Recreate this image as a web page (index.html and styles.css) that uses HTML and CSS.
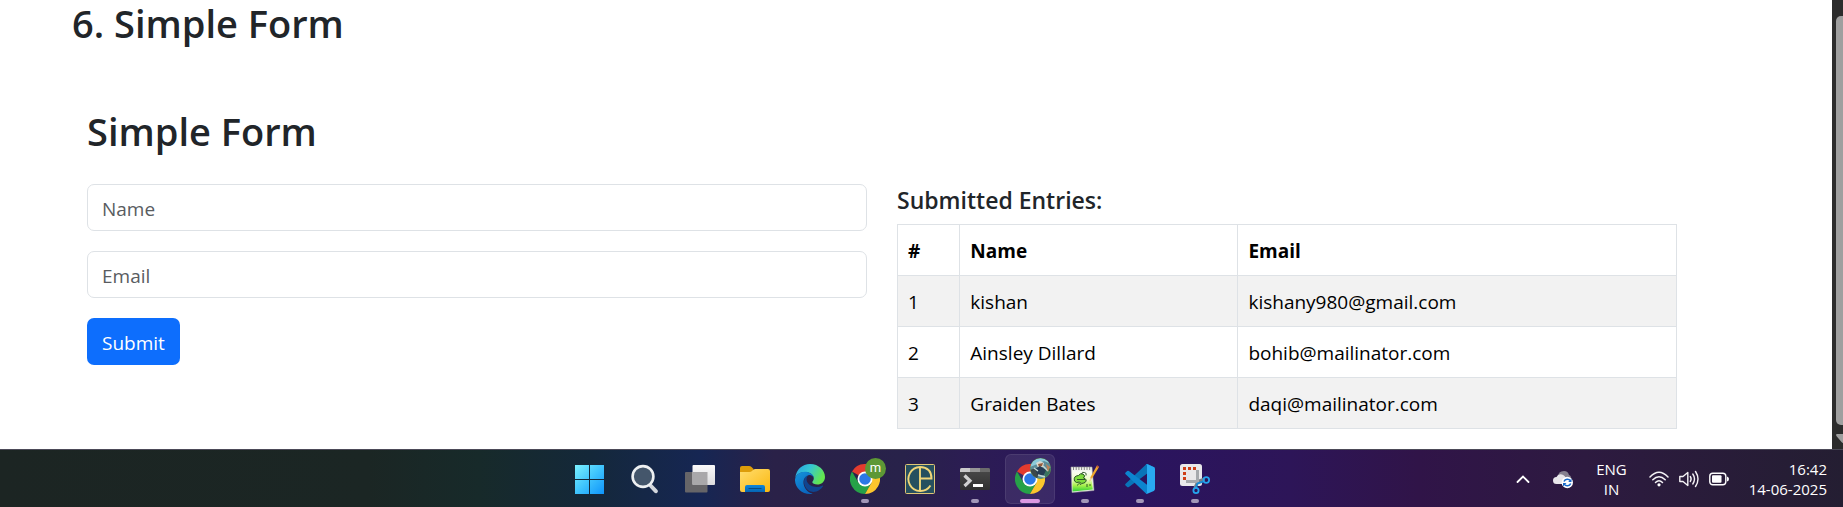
FILE: index.html
```html
<!DOCTYPE html>
<html lang="en">
<head>
<meta charset="utf-8">
<title>Simple Form</title>
<link rel="stylesheet" href="styles.css">
</head>
<body>
<div class="screen">
  <div class="viewport">
    <main class="page">
      <h1 class="title">6. Simple Form</h1>
      <section class="panel">
        <h2 class="title">Simple Form</h2>
        <div class="columns">
          <form class="form">
            <input class="field" type="text" placeholder="Name" aria-label="Name">
            <input class="field" type="email" placeholder="Email" aria-label="Email">
            <button class="submit" type="button">Submit</button>
          </form>
          <div class="entries">
            <h3 class="subtitle">Submitted Entries:</h3>
            <table class="table">
              <colgroup><col class="col-num"><col class="col-name"><col class="col-email"></colgroup>
              <thead>
                <tr><th scope="col">#</th><th scope="col">Name</th><th scope="col">Email</th></tr>
              </thead>
              <tbody>
                <tr><td>1</td><td>kishan</td><td>kishany980@gmail.com</td></tr>
                <tr><td>2</td><td>Ainsley Dillard</td><td>bohib@mailinator.com</td></tr>
                <tr><td>3</td><td>Graiden Bates</td><td>daqi@mailinator.com</td></tr>
              </tbody>
            </table>
          </div>
        </div>
      </section>
    </main>
    <div class="scrollbar">
      <div class="thumb"></div>
      <svg class="arrow" width="10" height="9" viewBox="0 0 10 9"><path d="M1 0H13Q14.500 0 13.500 2L9 8.500Q7 10 5.500 8L.4 2Q-.4 0 1 0Z" fill="#9f9f9f"/></svg>
    </div>
  </div>

  <footer class="taskbar">
    <nav class="apps" aria-label="Taskbar">
      <button class="app" aria-label="Start">
        <svg width="30" height="30" viewBox="0 0 30 30">
          <defs><linearGradient id="win" x1="0" y1="0" x2="30" y2="30" gradientUnits="userSpaceOnUse"><stop offset="0" stop-color="#7df3ff"/><stop offset=".5" stop-color="#3fc4fd"/><stop offset="1" stop-color="#0d93fb"/></linearGradient></defs>
          <path fill="url(#win)" d="M0 1H14V15H0zM15 1H29V15H15zM0 16H14V30H0zM15 16H29V30H15z"/>
        </svg>
      </button>
      <button class="app" aria-label="Search">
        <svg width="30" height="30" viewBox="0 0 30 30">
          <path d="M20.500 21.500L25.800 27.200" stroke="#d3d7dc" stroke-width="4" stroke-linecap="round"/>
          <circle cx="13" cy="12.500" r="10.400" fill="#44566b" stroke="#eef0f2" stroke-width="2.600"/>
        </svg>
      </button>
      <button class="app" aria-label="Task view">
        <svg width="30" height="30" viewBox="0 0 30 30">
          <defs><linearGradient id="tv" x1="0" y1="0" x2="0" y2="1"><stop offset="0" stop-color="#fafafa"/><stop offset="1" stop-color="#dcdcde"/></linearGradient></defs>
          <rect x="0" y="8" width="22.500" height="20.500" rx="1" fill="#666568"/>
          <rect x="7.500" y="1" width="22.500" height="20" rx="1" fill="url(#tv)"/>
          <path d="M7.500 8H22.500V21H8.500Q7.500 21 7.500 20Z" fill="#a9a8aa"/>
        </svg>
      </button>
      <button class="app" aria-label="File Explorer">
        <svg width="30" height="30" viewBox="0 0 30 30">
          <defs><linearGradient id="fe" x1="0" y1="0" x2="1" y2="1"><stop offset="0" stop-color="#ffdd6e"/><stop offset="1" stop-color="#fbb80f"/></linearGradient><linearGradient id="fb" x1="0" y1="0" x2="0" y2="1"><stop offset="0" stop-color="#0f86da"/><stop offset="1" stop-color="#0465b4"/></linearGradient></defs>
          <path d="M0 4Q0 2 2 2H9Q10.500 2 11.500 3L13.500 5V10H0Z" fill="#dd9d09"/>
          <path d="M0 8H9.500Q11 8 12 7L13 6Q14 5 15.500 5H28Q30 5 30 7V26Q30 28 28 28H2Q0 28 0 26Z" fill="url(#fe)"/>
          <path d="M5 28V23Q5 21 7 21H23Q25 21 25 23V28Z" fill="url(#fb)"/>
          <path d="M9 24.500H21" stroke="#084b83" stroke-width="1.200" stroke-linecap="round"/>
        </svg>
      </button>
      <button class="app" aria-label="Edge">
        <svg width="30" height="30" viewBox="0 0 30 30">
          <defs>
            <linearGradient id="e1" x1="0" y1="0" x2="1" y2=".4"><stop offset="0" stop-color="#259fe5"/><stop offset=".5" stop-color="#36c7d3"/><stop offset="1" stop-color="#63e650"/></linearGradient>
            <linearGradient id="e2" x1="0" y1="0" x2=".6" y2="1"><stop offset="0" stop-color="#1494dc"/><stop offset="1" stop-color="#0a64bd"/></linearGradient>
          </defs>
          <path d="M.3 14C1 5.500 7.500 0 15 0C24 0 30 6.500 30 13C30 18 26 20.500 22.500 20.500C19.500 20.500 17.300 19.500 17.300 18.300C17.300 17.300 18.800 16.700 18.800 14.300C18.800 10.500 14.500 8 10 8C5 8 1.500 10.500 .3 14Z" fill="url(#e1)"/>
          <path d="M12.300 10.500C8 14 7.500 22 13.500 26.500C19 30 25.500 26.500 28 22.300C28.300 21.700 27.800 21.400 27.200 21.700C21.500 24.300 14.500 22.500 12.200 18C10.800 15 12 11.500 14.500 10.300Z" fill="#10458f"/>
          <path d="M0 15.500C.8 10.800 5 7.800 9.700 7.800C14.200 7.800 18.800 10.300 18.800 14.300C18.500 12.300 16.700 11 14.500 11C9.500 11.300 7.500 16.800 9 21.500C10.300 25.800 14 29 17.800 29.700C16.800 29.900 16 30 15 30C6.500 30-.3 23.500 0 15.500Z" fill="url(#e2)"/>
        </svg>
      </button>
      <button class="app running" aria-label="Chrome">
        <svg width="30" height="30" viewBox="0 0 30 30">
          <path d="M15 15L2 7.500A15 15 0 0 1 28 7.500H15Z" fill="#e33b2e"/>
          <path d="M15 15L8.500 18.750L2 7.500A15 15 0 0 0 15 30L21.500 18.750Z" fill="#26a148"/>
          <path d="M15 7.500H28A15 15 0 0 1 15 30L21.500 18.750Z" fill="#fcc62d"/>
          <circle cx="15" cy="15" r="7.500" fill="#fff"/><circle cx="15" cy="15" r="5.800" fill="#2b78e6"/>
        </svg>
        <span class="badge">m</span>
      </button>
      <button class="app" aria-label="CE">
        <svg width="30" height="30" viewBox="0 0 30 30">
          <rect x=".5" y=".5" width="29" height="29" rx="1" fill="#26505f" stroke="#dfc675"/>
          <path d="M25.500 21.500A12 12 0 1 1 15 3Q26.500 3.500 26.500 14.500H15M15 3V27" fill="none" stroke="#f0d578" stroke-width="1.900"/>
        </svg>
      </button>
      <button class="app running" aria-label="Terminal">
        <svg width="30" height="30" viewBox="0 0 30 30">
          <defs><linearGradient id="tm" x1="0" y1="0" x2="0" y2="1"><stop offset="0" stop-color="#4b4b4b"/><stop offset="1" stop-color="#303030"/></linearGradient></defs>
          <rect y="4" width="30" height="22" rx="1.500" fill="url(#tm)"/>
          <path d="M0 8V5.500Q0 4 1.500 4H10V8Z" fill="#cacaca"/><path d="M10 4H20V8H10Z" fill="#969696"/><path d="M20 4H28.500Q30 4 30 5.500V8H20Z" fill="#6b6b6b"/>
          <path d="M4.500 11.500L10 16.800L4.500 22" fill="none" stroke="#d1d1d1" stroke-width="3.200"/>
          <path d="M13 21.500H23" stroke="#fff" stroke-width="3"/>
        </svg>
      </button>
      <button class="app running active" aria-label="Chrome, second profile">
        <svg width="30" height="30" viewBox="0 0 30 30">
          <path d="M15 15L2 7.500A15 15 0 0 1 28 7.500H15Z" fill="#e33b2e"/>
          <path d="M15 15L8.500 18.750L2 7.500A15 15 0 0 0 15 30L21.500 18.750Z" fill="#26a148"/>
          <path d="M15 7.500H28A15 15 0 0 1 15 30L21.500 18.750Z" fill="#fcc62d"/>
          <circle cx="15" cy="15" r="7.500" fill="#fff"/><circle cx="15" cy="15" r="5.800" fill="#2b78e6"/>
        </svg>
        <svg class="badge photo" width="21" height="21" viewBox="0 0 21 21">
          <defs><clipPath id="av"><circle cx="10.500" cy="10.500" r="10.300"/></clipPath></defs>
          <g clip-path="url(#av)">
            <rect width="21" height="21" fill="#5d8c98"/>
            <path d="M0 0H21V6L14 3L5 7L0 9Z" fill="#8bc9d9"/>
            <path d="M0 12L6 10L9 15L7 21H0Z" fill="#3c484b"/>
            <path d="M14 11L21 10V20L15 21Z" fill="#39735f"/>
            <path d="M6 5L10 3L14 5L13 9L8 10Z" fill="#d7dad1"/>
            <path d="M8 6L13 5L12 8L9 9Z" fill="#955c3c"/>
            <path d="M5 11L10 8L16 12L14 17L8 18Z" fill="#263c54"/>
            <path d="M4 10L8 13M13 8L18 13M8 17L15 19" stroke="#c5d8d3" stroke-width="1.500"/>
            <path d="M16 6L20 9L18 14Z" fill="#bb8058"/>
          </g>
        </svg>
      </button>
      <button class="app running" aria-label="Notepad++">
        <svg width="30" height="30" viewBox="0 0 30 30">
          <defs><linearGradient id="np" x1="0" y1="0" x2="0" y2="1"><stop offset="0" stop-color="#fbfdf6"/><stop offset=".4" stop-color="#eefbc4"/><stop offset=".7" stop-color="#a6f04a"/><stop offset="1" stop-color="#2fd136"/></linearGradient></defs>
          <path d="M1 3L22 3L24 26.500L2 28.500Z" fill="#f4f5ef" stroke="#999a9a" stroke-width=".6"/>
          <path d="M2 7.500H21L22.800 25.500L2.600 27.500Z" fill="url(#np)"/>
          <path d="M3 4.500H21" stroke="#888" stroke-width="3" stroke-dasharray="1 1.700"/>
          <path d="M4.500 17Q3 12 8.500 11.500Q10 9 13 10Q16 12 13.500 14Q18 15.500 15 18.500Q11 20.500 9.500 18Q6 19.500 4.500 17Z" fill="#7fdc3c" stroke="#285325" stroke-width="1"/>
          <path d="M7 15.500H15M11.500 10Q12 7.500 14.500 8.500Q17 9 16 11.500M7 21.500Q10 18 11 21M17 20V23M20 20V22" fill="none" stroke="#244824" stroke-width=".9"/>
          <path d="M19.500 17.500L20.500 13L27 1.500L29 3L22 14.500Z" fill="#f0a62c"/><path d="M19.500 17.500L20.300 13.600L22 14.600Z" fill="#edd1a2"/><path d="M26.300 2.700L27.300 1.300L29 2.600L28.200 4Z" fill="#b9543c"/>
        </svg>
      </button>
      <button class="app running" aria-label="Visual Studio Code">
        <svg width="30" height="30" viewBox="0 0 30 30">
          <path d="M.6 19.800Q-.3 20.700 .6 21.500L2.200 23Q3 23.600 3.900 23L30 3.700L22.500 0Q21.600-.2 21 .5Z" fill="#0974b8"/>
          <path d="M.6 10.200Q-.3 9.300 .6 8.500L2.200 7Q3 6.400 3.900 7L22 20.800V30Q21.300 29.800 20.700 29.200Z" fill="#0c85cf"/>
          <path d="M22.300 29.800Q21.500 30 20.800 29.300Q22 30 22 28V2Q22 0 20.800 .7Q21.500 0 22.500 .2L28.800 3.100Q30 3.700 30 5V25Q30 26.300 28.800 26.900Z" fill="#29a9f1"/>
        </svg>
      </button>
      <button class="app running" aria-label="Snipping Tool">
        <svg width="30" height="30" viewBox="0 0 30 30">
          <rect x="0" y="0" width="22" height="22" rx="2.500" fill="#e9e8ea"/>
          <path d="M3 4.500H6M8 4.500H11M13 4.500H16M4.500 8V11M4.500 13V16" stroke="#cf3f18" stroke-width="3"/>
          <path d="M17.500 6V18L14.800 24M6 17.500H18L24.500 15" fill="none" stroke="#7d8085" stroke-width="3"/>
          <path d="M17.500 6V17.500H6" fill="none" stroke="#a6a9ad" stroke-width="3"/>
          <path d="M23 17.500L17.500 19.500L15.800 24" fill="none" stroke="#198ad2" stroke-width="2"/>
          <circle cx="26.300" cy="16" r="2.800" fill="none" stroke="#25a5ee" stroke-width="1.800"/><circle cx="16" cy="26.500" r="2.600" fill="none" stroke="#25a5ee" stroke-width="1.800"/>
        </svg>
      </button>
    </nav>

    <div class="tray">
      <svg class="chevron" width="14" height="14" viewBox="0 0 14 14"><path d="M1.500 10L7 4.500L12.500 10" fill="none" stroke="#fff" stroke-width="1.800" stroke-linecap="round"/></svg>
      <svg class="cloud" width="20" height="20" viewBox="0 0 20 20">
        <path d="M5 8Q5 2 11 2Q15 2 16 6Q19 7 18 12H8Z" fill="#86808f"/>
        <path d="M3.500 15Q0 15 0 11.500Q0 8 3.500 8Q5 4.500 9 5.500Q12.500 6.500 13 10V15Z" fill="#e8e6ea"/>
        <circle cx="14.300" cy="13.500" r="5.700" fill="#fff"/>
        <path d="M11 12.500A3.600 3.600 0 0 1 17.500 12M17.700 14.500A3.600 3.600 0 0 1 11.200 15" fill="none" stroke="#1768c9" stroke-width="1.500"/>
        <path d="M18.500 9.500V13H15.200ZM10 17.500V14H13.500Z" fill="#1768c9"/>
      </svg>
      <div class="lang"><span>ENG</span><span>IN</span></div>
      <div class="status">
        <svg width="20" height="20" viewBox="0 0 20 20"><g fill="none" stroke="#f4f2f5" stroke-width="1.500" stroke-linecap="round"><path d="M1 8Q10-1.500 19 8"/><path d="M3.800 10.800Q10 4.500 16.200 10.800"/><path d="M6.500 13.500Q10 10 13.500 13.500"/></g><circle cx="10" cy="15.800" r="1.600" fill="#fff"/></svg>
        <svg width="20" height="20" viewBox="0 0 20 20"><g fill="none" stroke="#f4f2f5" stroke-width="1.400" stroke-linecap="round" stroke-linejoin="round"><path d="M.8 7.500H4L8.800 3.500V16.500L4 12.500H.8Z"/><path d="M11.300 7.500Q13 10 11.300 12.500"/><path d="M13.800 5Q17.200 10 13.800 15"/><path d="M16.500 2.500Q21.500 10 16.500 17.500"/></g></svg>
        <svg width="20" height="20" viewBox="0 0 20 20"><rect x=".8" y="4.200" width="16" height="11.600" rx="3" fill="none" stroke="#fff" stroke-width="1.400"/><rect x="3" y="6.300" width="9.500" height="7.400" rx="1" fill="#fff"/><path d="M18 7.500Q20 8 20 10T18 12.500Z" fill="#fff"/></svg>
      </div>
      <div class="clock"><span>16:42</span><span>14-06-2025</span></div>
    </div>
  </footer>
</div>
</body>
</html>
```

FILE: styles.css
```css
* {
  box-sizing: border-box;
}

body {
  margin: 0;
  font-family: "Open Sans", "Noto Sans", sans-serif;
  font-size: 19px;
  line-height: 30px;
  color: #212529;
  background: #fff;
}

.screen {
  display: flex;
  flex-direction: column;
  min-height: 100vh;
}

.viewport {
  display: flex;
  flex: 1;
}

.page {
  flex: 1;
  padding: 0 140px 20px 72px;
}

.title {
  margin: 0;
  font-size: 38px;
  font-weight: 600;
  line-height: 46px;
}

.panel {
  padding: 62px 15px 0;
}

.columns {
  display: grid;
  grid-template-columns: 1fr 1fr;
  gap: 30px;
  padding-top: 30px;
}

.form {
  display: flex;
  flex-direction: column;
  align-items: flex-start;
  gap: 20px;
}

.field {
  width: 100%;
  height: 47px;
  padding: 2px 14px 0;
  border: 1px solid #dee2e6;
  border-radius: 7px;
  font: inherit;
  color: #212529;
  background: #fff;
}

.field::placeholder {
  color: #595c5f;
  opacity: 1;
}

.submit {
  height: 47px;
  padding: 2px 15px 0;
  border: 0;
  border-radius: 7px;
  font: inherit;
  color: #fff;
  background: #0d6efd;
}

.subtitle {
  margin: 0 0 8px;
  font-size: 23px;
  font-weight: 600;
  line-height: 32px;
}

.table {
  width: 100%;
  border-collapse: collapse;
  table-layout: fixed;
  color: #000;
}

.col-num {
  width: 8%;
}

.col-name {
  width: 35.7%;
}

.table th,
.table td {
  padding: 11px 10px 9px;
  border: 1px solid #dee2e6;
  text-align: left;
}

.table tbody tr:nth-child(odd) {
  background: #f2f2f2;
}

.scrollbar {
  display: flex;
  flex-direction: column;
  gap: 9px;
  width: 11px;
  padding: 16px 0 6px 4px;
  overflow: hidden;
  background: #2c2c2c;
}

.thumb {
  flex: 1;
  border-radius: 5px 0 0 5px;
  background: #9f9f9f;
}

.arrow {
  display: block;
}

.taskbar {
  display: grid;
  grid-template-columns: 565fr auto 623fr;
  height: 58px;
  border-top: 1px solid #4c4a58;
  background: linear-gradient(90deg, #1c2523 0%, #1b2624 20%, #172a2a 26%, #14283a 32%, #162653 38%, #2a2148 42%, #28224a 49%, #2c1c54 53%, #2a1460 60%, #2d1558 70%, #301448 77%, #2d1a40 86%, #241e32 100%);
}

.apps {
  grid-column: 2;
  display: flex;
  gap: 5px;
  padding-top: 4px;
}

.app {
  position: relative;
  display: grid;
  place-items: center;
  width: 50px;
  height: 50px;
  padding: 0;
  border: 1px solid transparent;
  border-radius: 6px;
  background: none;
}

.app.active {
  border-color: #ffffff14;
  background: #ffffff14;
}

.app.running::after {
  content: "";
  position: absolute;
  bottom: 0;
  left: 50%;
  width: 8px;
  height: 4px;
  border-radius: 2px;
  background: #a297b8;
  transform: translateX(-50%);
}

.app.active::after {
  width: 20px;
  background: #dc98e2;
}

.badge {
  position: absolute;
  top: 3px;
  right: 3px;
  width: 21px;
  height: 21px;
  border-radius: 50%;
  font-family: Roboto, sans-serif;
  font-size: 13px;
  line-height: 19px;
  text-align: center;
  color: #fff;
  background: #5d9835;
}

.tray {
  display: flex;
  align-items: center;
  justify-content: flex-end;
  padding-right: 16px;
  font-family: "Open Sans", "Noto Sans", sans-serif;
  font-size: 15px;
  line-height: 20px;
  color: #fff;
}

.chevron {
  margin-right: 23px;
}

.cloud {
  margin-right: 23px;
}

.lang,
.clock {
  display: flex;
  flex-direction: column;
}

.lang {
  align-items: center;
  margin-right: 22px;
}

.status {
  display: flex;
  gap: 10px;
  margin-right: 20px;
}

.clock {
  align-items: flex-end;
}
```
